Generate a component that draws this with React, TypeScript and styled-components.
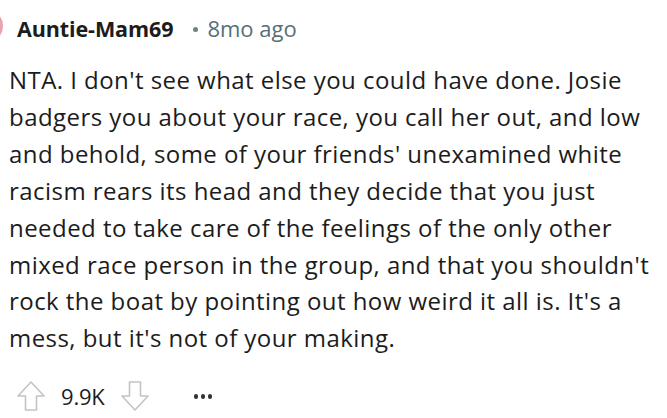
import styled, { createGlobalStyle } from "styled-components";

const GlobalStyle = createGlobalStyle`
  body {
    margin: 0;
    background: #ffffff;
    font-family: "Open Sans", "Noto Sans", sans-serif;
  }
`;

const Comment = styled.article`
  position: relative;
  width: 667px;
  height: 418px;
  overflow: hidden;
  box-sizing: border-box;
  padding: 13px 12px 0 9px;
`;

const AvatarEdge = styled.span`
  position: absolute;
  left: -22px;
  top: 11px;
  width: 25px;
  height: 30px;
  border-radius: 50%;
  background: #e9a3ae;
`;

const Header = styled.header`
  display: flex;
  align-items: center;
  padding-left: 8px;
  height: 30px;
`;

const Author = styled.span`
  font-size: 21.5px;
  font-weight: 700;
  color: #1c1c1c;
  letter-spacing: -0.1px;
`;

const Meta = styled.span`
  font-size: 22px;
  color: #576f76;
`;

const Dot = styled.span`
  width: 5px;
  height: 5px;
  border-radius: 50%;
  background: #6f8187;
  margin: 2px 9px 0 20px;
`;

const Body = styled.p`
  margin: 19px 0 0;
  font-size: 24px;
  line-height: 36.9px;
  color: #1c1c1c;
  letter-spacing: 0.45px;
`;

const Actions = styled.footer`
  display: flex;
  align-items: center;
  margin-top: 24px;
  padding-left: 8px;
  height: 30px;
`;

const Vote = styled.svg`
  width: 28px;
  height: 30px;
  display: block;
`;

const Score = styled.span`
  font-size: 22px;
  color: #1c1c1c;
  margin: 0 16px 0 16px;
  letter-spacing: -0.2px;
`;

const More = styled.span`
  display: flex;
  gap: 2.5px;
  margin-left: 45px;
`;

const MoreDot = styled.span`
  width: 4.5px;
  height: 4.5px;
  border-radius: 50%;
  background: #333;
`;

const Arrow = ({ down }: { down?: boolean }) => (
  <Vote viewBox="0 0 28 30" style={down ? { transform: "rotate(180deg)" } : undefined}>
    <path
      d="M14 1 L27 15 L19.5 15 L19.5 29 L8.5 29 L8.5 15 L1 15 Z"
      fill="none"
      stroke="#c4c4c4"
      strokeWidth="1.6"
      strokeLinejoin="round"
    />
  </Vote>
);

export default function App() {
  return (
    <>
      <GlobalStyle />
      <Comment>
        <AvatarEdge />
        <Header>
          <Author>Auntie-Mam69</Author>
          <Dot />
          <Meta>8mo ago</Meta>
        </Header>
        <Body>
          NTA. I don't see what else you could have done. Josie badgers you
          about your race, you call her out, and low and behold, some of your
          friends' unexamined white racism rears its head and they decide that
          you just needed to take care of the feelings of the only other mixed
          race person in the group, and that you shouldn't rock the boat by
          pointing out how weird it all is. It's a mess, but it's not of your
          making.
        </Body>
        <Actions>
          <Arrow />
          <Score>9.9K</Score>
          <Arrow down />
          <More>
            <MoreDot />
            <MoreDot />
            <MoreDot />
          </More>
        </Actions>
      </Comment>
    </>
  );
}
